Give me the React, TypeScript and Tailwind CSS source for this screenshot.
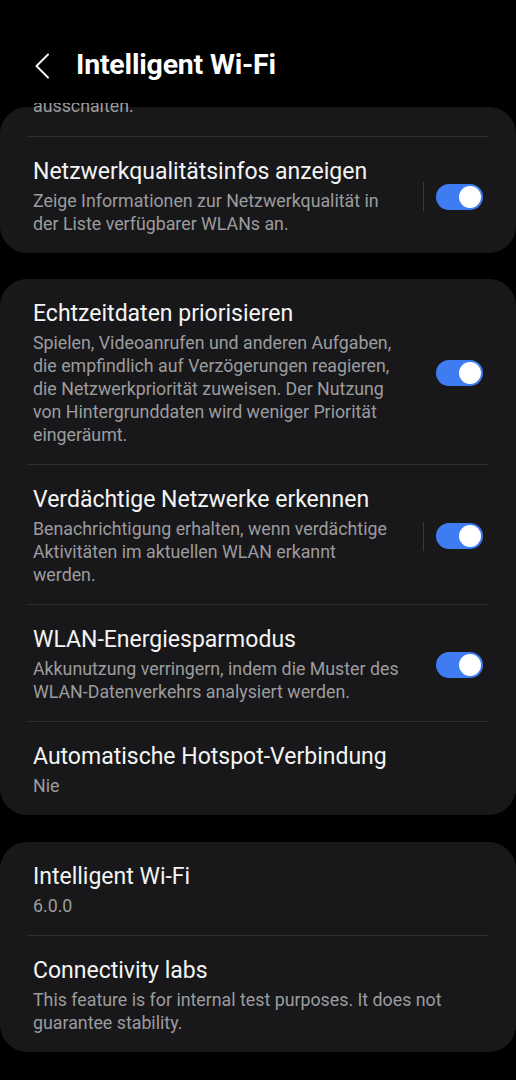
import React from 'react';

type Item = {
  title: string;
  lines: string[];
  toggle?: boolean;
  split?: boolean;
};

const Toggle: React.FC<{ split?: boolean }> = ({ split }) => (
  <div className="flex items-center shrink-0">
    {split && <div className="w-px h-[29px] bg-[#3a3a3d] mr-[12px]" />}
    <div className="w-[47px] h-[26px] rounded-full bg-[#3f7cf2] flex items-center justify-end pr-[2px]">
      <div className="w-[22px] h-[22px] rounded-full bg-white" />
    </div>
  </div>
);

const Row: React.FC<{ item: Item }> = ({ item }) => (
  <div className="flex items-center pl-[33px] pr-[33px] pt-[21px] pb-[18px]">
    <div className="flex-1 min-w-0">
      <div className="text-[23px] leading-[28px] text-[#f4f4f4] whitespace-nowrap">{item.title}</div>
      <div className="mt-[3px] text-[17.8px] leading-[23px] text-[#9c9c9e]">
        {item.lines.map((l, i) => (
          <div key={i} className="whitespace-nowrap">{l}</div>
        ))}
      </div>
    </div>
    {item.toggle && <Toggle split={item.split} />}
  </div>
);

const Divider = () => <div className="mx-[27px] h-px bg-[#2f2f32]" />;

const Card: React.FC<{ items: Item[]; className?: string; children?: React.ReactNode }> = ({ items, className, children }) => (
  <div className={`flow-root bg-[#18181a] rounded-[27px] ${className ?? ''}`}>
    {children}
    {items.map((it, i) => (
      <React.Fragment key={it.title}>
        {i > 0 && <Divider />}
        <Row item={it} />
      </React.Fragment>
    ))}
  </div>
);

const card2: Item[] = [
  {
    title: 'Echtzeitdaten priorisieren',
    lines: [
      'Spielen, Videoanrufen und anderen Aufgaben,',
      'die empfindlich auf Verzögerungen reagieren,',
      'die Netzwerkpriorität zuweisen. Der Nutzung',
      'von Hintergrunddaten wird weniger Priorität',
      'eingeräumt.',
    ],
    toggle: true,
  },
  {
    title: 'Verdächtige Netzwerke erkennen',
    lines: [
      'Benachrichtigung erhalten, wenn verdächtige',
      'Aktivitäten im aktuellen WLAN erkannt',
      'werden.',
    ],
    toggle: true,
    split: true,
  },
  {
    title: 'WLAN-Energiesparmodus',
    lines: ['Akkunutzung verringern, indem die Muster des', 'WLAN-Datenverkehrs analysiert werden.'],
    toggle: true,
  },
  { title: 'Automatische Hotspot-Verbindung', lines: ['Nie'] },
];

const card3: Item[] = [
  { title: 'Intelligent Wi-Fi', lines: ['6.0.0'] },
  {
    title: 'Connectivity labs',
    lines: ['This feature is for internal test purposes. It does not', 'guarantee stability.'],
  },
];

export default function App() {
  return (
    <div className="w-full h-[1080px] overflow-hidden bg-black font-['Roboto',sans-serif]">
      <header className="h-[103px] flex items-center pt-[28px] pl-[34px]">
        <svg width="16" height="26" viewBox="0 0 16 26" fill="none" className="shrink-0">
          <path d="M14 1.5 L2.5 13 L14 24.5" stroke="#f2f2f2" strokeWidth="2" strokeLinecap="round" strokeLinejoin="round" />
        </svg>
        <h1 className="ml-[26px] text-[28.5px] font-bold text-white tracking-[-0.2px]">Intelligent Wi-Fi</h1>
      </header>

      <Card
        className="mt-[4px]"
        items={[
          {
            title: 'Netzwerkqualitätsinfos anzeigen',
            lines: ['Zeige Informationen zur Netzwerkqualität in', 'der Liste verfügbarer WLANs an.'],
            toggle: true,
            split: true,
          },
        ]}
      >
        <div className="-mt-[4px] h-[9px] overflow-hidden pl-[33px]">
          <div className="-mt-[9px] text-[17.8px] leading-[23px] text-[#9c9c9e]">ausschalten.</div>
        </div>
        <div className="h-[24px]" />
        <Divider />
      </Card>

      <Card className="mt-[26px]" items={card2} />
      <Card className="mt-[27px]" items={card3} />
    </div>
  );
}
